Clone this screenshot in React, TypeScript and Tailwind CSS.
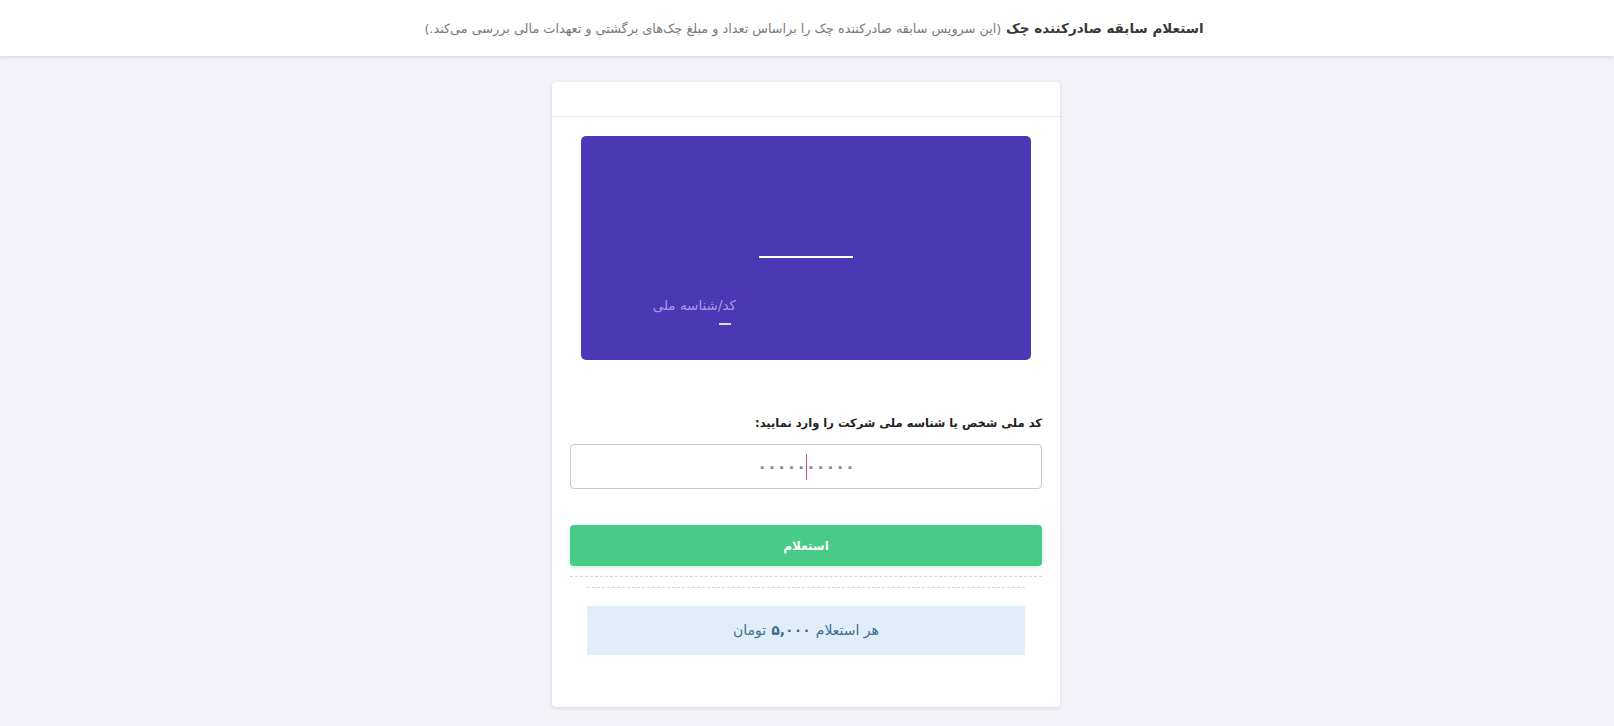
import React from "react";

export default function App() {
  return (
    <div
      dir="rtl"
      className="min-h-[726px] w-full bg-[#f2f2f8] text-[#333]"
      style={{ fontFamily: '"DejaVu Sans", "Noto Sans", sans-serif' }}
    >
      <header className="h-[56px] bg-white shadow-[0_1px_4px_rgba(0,0,0,0.12)] flex items-center justify-center pl-[14px]">
        <h1 className="text-[13.5px] font-bold text-[#3a3a3a]">
          استعلام سابقه صادرکننده چک{" "}
          <span className="text-[12.8px] font-normal text-[#7a7a7a]">
            (این سرویس سابقه صادرکننده چک را براساس تعداد و مبلغ چک‌های برگشتی و تعهدات مالی بررسی می‌کند.)
          </span>
        </h1>
      </header>

      <main className="flex justify-center pt-[26px] pb-[19px] pr-[2px]">
        <div className="w-[508px] bg-white rounded-[4px] shadow-[0_1px_4px_rgba(0,0,0,0.12)]">
          <div className="h-[35px] border-b border-[#ebebef]" />
          <div className="px-[18px] pt-[19px] pb-[52px]">
            <div className="mx-[11px] h-[224px] rounded-[5px] bg-[#4b38b4] relative">
              <div className="absolute left-[178px] top-[120px] w-[94px] h-[2px] bg-white" />
              <div className="absolute left-[65px] top-[159px] w-[90px] text-right text-[13.5px] text-[#a99be6] leading-[20px]">
                کد/شناسه ملی
              </div>
              <div className="absolute left-[138px] top-[187px] w-[12px] h-[2px] bg-[#e8d8ee]" />
            </div>

            <label className="block mt-[53px] text-[11.5px] font-bold text-[#222] leading-[20px]">
              کد ملی شخص یا شناسه ملی شرکت را وارد نمایید:
            </label>
            <div className="relative mt-[11px]">
              <input
                type="text"
                placeholder="۰۰۰۰۰۰۰۰۰۰"
                className="w-full h-[45px] rounded-[4px] border border-[#c8c8d0] bg-white text-center text-[16px] font-bold tracking-[4px] text-[#555] placeholder:text-[#8a8a96] outline-none"
              />
              <span className="absolute left-1/2 top-[10px] w-px h-[26px] bg-[#c0508a]" />
            </div>

            <button className="mt-[36px] w-full h-[41px] rounded-[4px] bg-[#47cb86] text-white text-[12px] font-bold shadow-[0_2px_4px_rgba(71,203,134,0.25)]">
              استعلام
            </button>

            <div className="mt-[10px] border-t border-dashed border-[#d6d6dc]" />
            <div className="mx-[17px] mt-[10px] border-t border-dashed border-[#d6d6dc]" />

            <div className="mx-[17px] mt-[18px] h-[49px] bg-[#dfeef9] flex items-center justify-center text-[14px] text-[#3f6f8e]">
              هر استعلام <span className="font-bold mx-[5px]">۵,۰۰۰</span> تومان
            </div>
          </div>
        </div>
      </main>
    </div>
  );
}
